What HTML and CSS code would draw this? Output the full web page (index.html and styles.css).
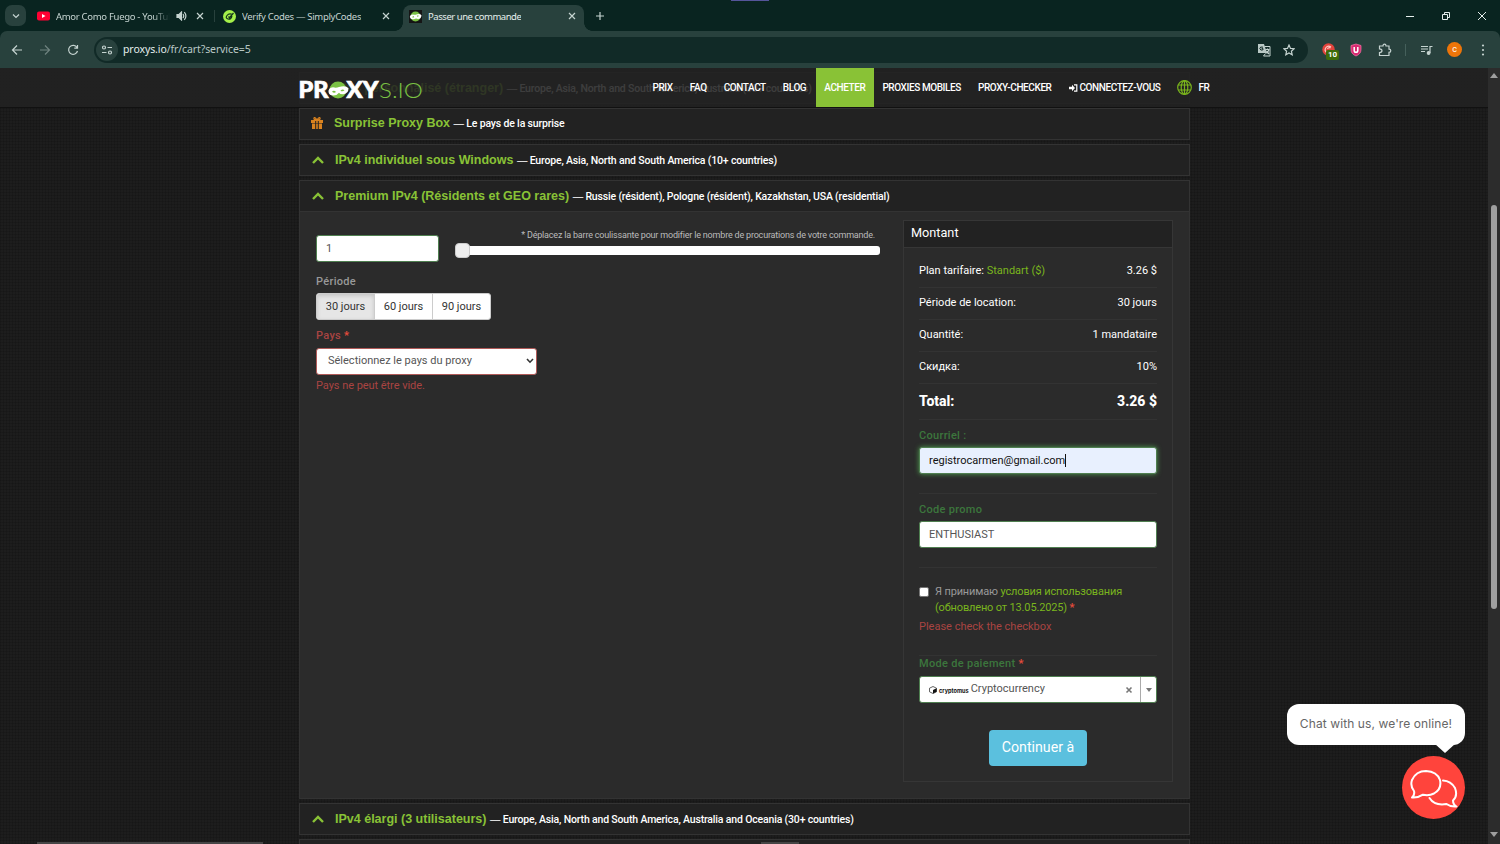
FILE: index.html
```html
<!DOCTYPE html>
<html lang="fr">
<head>
    <meta charset="UTF-8">
    <meta name="viewport" content="width=device-width, initial-scale=1.0">
    <title>Passer une commande</title>
    <link rel="stylesheet" href="styles.css">
</head>
<body>

    <!-- browser -->
    <div class="tabs">
        <div class="tab-search"><svg width="10" height="10" viewBox="0 0 10 10"><path d="M2 3.500l3 3 3-3" /></svg></div>
        <div class="tab tab-first">
            <svg class="fav" width="13" height="10" viewBox="0 0 13 10"><rect width="13" height="9" y=".5" rx="2" fill="#f03"/><path d="M5 3v4l3.500-2z" fill="#fff"/></svg>
            <span class="tab-name fade">Amor Como Fuego - YouTube</span>
            <svg class="sound" width="11" height="10" viewBox="0 0 11 10"><path d="M1 3.500h2l2.500-2.500v8L3 6.500H1z" fill="#c5d3d0"/><path d="M7 3q1.500 2 0 4M8.300 1.200q3.200 3.800 0 7.600"/></svg>
            <svg class="close" width="8" height="8" viewBox="0 0 8 8"><path d="M1 1l6 6M7 1l-6 6"/></svg>
        </div>
        <div class="tab tab-second">
            <svg class="fav" width="13" height="13" viewBox="0 0 13 13"><circle cx="6.500" cy="6.500" r="6.500" fill="#a5f04a"/><path class="code-mark" d="M9.500 4.500Q6 3 4 5.500t1 3.500q3 .8 4-3M5.500 6.500l1 1.200L10.500 3"/></svg>
            <span class="tab-name">Verify Codes — SimplyCodes</span>
            <svg class="close" width="8" height="8" viewBox="0 0 8 8"><path d="M1 1l6 6M7 1l-6 6"/></svg>
        </div>
        <div class="tab tab-active">
            <svg class="fav" width="13" height="13" viewBox="0 0 13 13"><rect width="13" height="13" fill="#151515"/><circle cx="6.500" cy="6.500" r="5" fill="#7ac143"/><path d="M.8 7Q1 4.500 4 4.500q2 .8 4-.3 4-.8 4.500 1.300-.5 3.500-3.500 3.500-2-1.200-4 .2Q1.500 10 .8 7z" fill="#fff"/><path d="M3.500 7.200l1.500-.6M8 6.200l1.500-.5" stroke="#7ac143"/></svg>
            <span class="tab-name">Passer une commande</span>
            <svg class="close" width="8" height="8" viewBox="0 0 8 8"><path d="M1 1l6 6M7 1l-6 6"/></svg>
        </div>
        <svg class="new-tab" width="10" height="10" viewBox="0 0 10 10"><path d="M5 1v8M1 5h8"/></svg>
        <div class="window-btns">
            <svg width="10" height="10" viewBox="0 0 10 10"><path d="M1 5.500h8"/></svg>
            <svg width="10" height="10" viewBox="0 0 10 10"><path d="M1.500 3.500h5v5h-5zM3.500 3.500v-2h5v5h-2"/></svg>
            <svg width="10" height="10" viewBox="0 0 10 10"><path d="M1 1l8 8M9 1L1 9"/></svg>
        </div>
        <div class="tab-mark"></div>
    </div>

    <div class="toolbar">
        <svg class="tool-icon" width="12" height="12" viewBox="0 0 12 12"><path d="M11 6H2M6 1.500L1.500 6 6 10.500"/></svg>
        <svg class="tool-icon off" width="12" height="12" viewBox="0 0 12 12"><path d="M1 6h9M6 1.500L10.500 6 6 10.500"/></svg>
        <svg class="tool-icon" width="12" height="12" viewBox="0 0 12 12"><path d="M10 3.500A4.500 4.500 0 1 0 10.500 7M10.500 1v3.200H7.300"/></svg>
        <div class="address">
            <div class="site-info"><svg width="12" height="12" viewBox="0 0 12 12"><circle cx="3" cy="3.500" r="1.500"/><path d="M6.500 3.500H11M1 8.500h4.500"/><circle cx="9" cy="8.500" r="1.500"/></svg></div>
            <span class="url">proxys.io<span>/fr/cart?service=5</span></span>
            <svg class="translate" width="14" height="14" viewBox="0 0 14 14"><path d="M1 1h6l3 9H1z" fill="#b9c8c5" stroke="none"/><path d="M7.500 3.500H13V13H6.500l2-2.500" stroke-width="1"/><path class="letter-g" d="M6 4.200Q3 3.200 2.800 5.600 3.500 8 6 6.800V5.600H4.600"/><path d="M8.500 6.500h4M10.500 5.500v1M12 6.500Q11 9.500 9.300 10.200M9.500 8l2.500 3"/></svg>
            <svg class="star" width="12" height="12" viewBox="0 0 12 12"><path d="M6 1l1.500 3.400 3.700.3-2.800 2.500.8 3.600L6 8.900l-3.200 1.900.8-3.600L.8 4.700l3.700-.3z"/></svg>
        </div>
        <div class="extensions">
            <div class="ext-red">
                <svg width="13" height="13" viewBox="0 0 13 13"><circle cx="6.500" cy="6.500" r="6.200" fill="#e2433c"/><path d="M9 4Q6 2 4 4.500t.5 5M8.500 5q-2-1-3 1" stroke="#ffc9c5"/></svg>
                <span class="badge">10</span>
            </div>
            <svg class="ext-shield" width="12" height="14" viewBox="0 0 12 14"><path class="shield" d="M6 1l5 1.500v4Q11 11 6 13 1 11 1 6.500v-4z"/><path class="letter-u" d="M4.200 4v3.500q0 1.800 1.800 1.800t1.800-1.800V4"/></svg>
            <svg class="ext-puzzle" width="14" height="14" viewBox="0 0 14 14"><path d="M1.500 3H5q0-1.800 1.500-1.800T8 3h3v3.200q1.800 0 1.800 1.600T11 9.400v3.100H1.500V9.600Q4 9.300 4 7.700T1.500 5.900z"/></svg>
            <div class="divider"></div>
            <svg class="ext-music" width="13" height="12" viewBox="0 0 13 12"><path d="M1 2.500h7M1 5h7M1 7.500h4M10 9V2.500h2.500"/><circle cx="8.600" cy="9" r="1.300" fill="#c5d3d0"/></svg>
            <div class="avatar">c</div>
            <svg class="ext-more" width="4" height="12" viewBox="0 0 4 12"><circle cx="2" cy="1.500" r="1.100"/><circle cx="2" cy="6" r="1.100"/><circle cx="2" cy="10.500" r="1.100"/></svg>
        </div>
    </div>

    <!-- site -->
    <div class="page">
        <div class="content">

            <div class="plan plan-title">
                <svg class="arrow" width="12" height="8" viewBox="0 0 12 8"><path d="M1 7l5-5 5 5"/></svg>
                <h4>IPv4 personnalisé (étranger)</h4><p><i>—</i> Europe, Asia, North and South America, Australia (30+ countries)</p>
            </div>

            <div class="plan plan-title plan-box">
                <svg class="gift" width="12" height="12" viewBox="0 0 12 12"><path d="M0 3h12v3H0zM1 6.500h10V12H1z" fill="#d9821f"/><path d="M6 3Q2.500 3 3 1.200T6 3q2.500-3.500 3-1.800T6 3" stroke="#d9821f" stroke-width="1.200"/><path d="M4.700 4v8M7.300 4v8" stroke="#222"/></svg>
                <h4>Surprise Proxy Box</h4><p><i>—</i> Le pays de la surprise</p>
            </div>

            <div class="plan plan-title">
                <svg class="arrow" width="12" height="8" viewBox="0 0 12 8"><path d="M1 7l5-5 5 5"/></svg>
                <h4>IPv4 individuel sous Windows</h4><p><i>—</i> Europe, Asia, North and South America (10+ countries)</p>
            </div>

            <div class="plan plan-open">
                <div class="plan-title">
                    <svg class="arrow" width="12" height="8" viewBox="0 0 12 8"><path d="M1 7l5-5 5 5"/></svg>
                    <h4>Premium IPv4 (Résidents et GEO rares)</h4><p><i>—</i> Russie (résident), Pologne (résident), Kazakhstan, USA (residential)</p>
                </div>
                <div class="plan-body">
                    <div class="order">
                        <div class="count">
                            <div class="field count-input">1</div>
                            <div class="slider">
                                <p class="hint">* Déplacez la barre coulissante pour modifier le nombre de procurations de votre commande.</p>
                                <div class="track"><div class="handle"></div></div>
                            </div>
                        </div>
                        <p class="label label-period">Période</p>
                        <div class="periods">
                            <div class="active">30 jours</div>
                            <div>60 jours</div>
                            <div>90 jours</div>
                        </div>
                        <p class="label label-country">Pays <b>*</b></p>
                        <div class="field country">
                            <span>Sélectionnez le pays du proxy</span>
                            <svg width="8" height="6" viewBox="0 0 8 6"><path d="M1 1l3 3.200L7 1" stroke="#333" stroke-width="1.600"/></svg>
                        </div>
                        <p class="error">Pays ne peut être vide.</p>
                    </div>

                    <div class="amount">
                        <div class="amount-title">Montant</div>
                        <div class="amount-body">
                            <div class="line"><span>Plan tarifaire: <a>Standart ($)</a></span><span>3.26 $</span></div>
                            <div class="line"><span>Période de location:</span><span>30 jours</span></div>
                            <div class="line"><span>Quantité:</span><span>1 mandataire</span></div>
                            <div class="line"><span>Скидка:</span><span>10%</span></div>
                            <div class="line total"><span>Total:</span><span>3.26 $</span></div>
                            <div class="group">
                                <p class="label label-ok">Courriel :</p>
                                <div class="field email">registrocarmen@gmail.com<i></i></div>
                            </div>
                            <div class="group">
                                <p class="label label-ok">Code promo</p>
                                <div class="field promo">ENTHUSIAST</div>
                            </div>
                            <div class="group rules">
                                <div class="rules-row">
                                    <div class="checkbox"></div>
                                    <p>Я принимаю <a>условия использования<br>(обновлено от 13.05.2025)</a> <b>*</b></p>
                                </div>
                                <p class="error">Please check the checkbox</p>
                            </div>
                            <div class="payment">
                                <p class="label label-ok">Mode de paiement <b>*</b></p>
                                <div class="field pay-select">
                                    <svg width="8" height="8" viewBox="0 0 8 8"><path d="M4 .5L7.500 2.200v3.600L4 7.500.5 5.800V2.200z" stroke="#222" stroke-width=".7"/><path d="M4 4l3.500-1.800v3.600L4 7.500z" fill="#111"/></svg>
                                    <span class="crypto">cryptomus</span>
                                    <span class="pay-name">Cryptocurrency</span>
                                    <svg class="clear" width="8" height="8" viewBox="0 0 8 8"><path d="M1.500 1.500l5 5M6.500 1.500l-5 5" stroke="#777" stroke-width="1.600"/></svg>
                                    <div class="pay-arrow"><svg width="6" height="4" viewBox="0 0 6 4"><path d="M0 0h6L3 4z" fill="#777"/></svg></div>
                                </div>
                            </div>
                            <div class="submit">Continuer à</div>
                        </div>
                    </div>
                </div>
            </div>

            <div class="plan plan-title plan-ext">
                <svg class="arrow" width="12" height="8" viewBox="0 0 12 8"><path d="M1 7l5-5 5 5"/></svg>
                <h4>IPv4 élargi (3 utilisateurs)</h4><p><i>—</i> Europe, Asia, North and South America, Australia and Oceania (30+ countries)</p>
            </div>
            <div class="plan plan-title"></div>
        </div>

        <div class="nav">
            <svg class="logo" width="124" height="22" viewBox="0 0 124 22">
                <text class="logo-bold" x="-.5" y="18" textLength="30" lengthAdjust="spacingAndGlyphs">PR</text>
                <circle cx="39" cy="10" r="8.500" fill="#7ac143"/>
                <path d="M29.500 12Q29 8 34 7.200q3 1 6-.2 7-1.800 9.500 1.200 0 5-5 6-3.500.2-4.500-1.500-2 2.800-5.500 2.800-4.500 0-5-3.500z" fill="#fff"/>
                <path d="M33 11.800q2-2 4 .3-2 1.200-4-.3zM41.500 10.800q2-2.200 4-.5-1.800 1.800-4 .5z" fill="#7ac143"/>
                <text class="logo-bold" x="47.500" y="18" textLength="32" lengthAdjust="spacingAndGlyphs">XY</text>
                <text class="logo-thin" x="80" y="18" textLength="44" lengthAdjust="spacingAndGlyphs">S.IO</text>
            </svg>
            <div class="menu">
                <a>PRIX</a>
                <a>FAQ</a>
                <a>CONTACT</a>
                <a>BLOG</a>
                <a class="buy">ACHETER</a>
                <a>PROXIES MOBILES</a>
                <a>PROXY-CHECKER</a>
                <a><svg width="9" height="8" viewBox="0 0 9 8"><path d="M0 2.800h3V.8L6 4 3 7.200v-2H0z" fill="#fff"/><path d="M5 .8h2.800v6.400H5" stroke="#fff" stroke-width="1.200"/></svg> CONNECTEZ-VOUS</a>
                <a class="lang"><svg width="15" height="15" viewBox="0 0 15 15"><circle cx="7.500" cy="7.500" r="6.800"/><ellipse cx="7.500" cy="7.500" rx="3.300" ry="6.800"/><path d="M7.500.7v13.600M1.200 5h12.600M1.200 10h12.600"/></svg>FR</a>
            </div>
        </div>

        <div class="chat">
            <div class="chat-text">Chat with us, we're online!</div>
            <div class="chat-btn">
                <svg width="50" height="42" viewBox="0 0 50 42"><path d="M5 24Q1 19 3 13 7 4 17 4q11 .5 14 9 2 9-6 13.500-5 2.500-11 1.200Q9 31 3 30.500 6 28 5 24z"/><path d="M34 13.500q8 .5 12 7.500 3 8-2 12.500 0 4 3.500 6-6 .5-10-2.500-12 2-17-6"/></svg>
            </div>
        </div>

        <div class="scrollbar">
            <svg width="8" height="5" viewBox="0 0 8 5"><path d="M4 0l4 5H0z" fill="#9f9f9f"/></svg>
            <div class="thumb"></div>
            <svg width="8" height="5" viewBox="0 0 8 5"><path d="M4 5l4-5H0z" fill="#9f9f9f"/></svg>
        </div>
        <div class="edge edge-left"></div>
        <div class="edge edge-center"></div>
    </div>

</body>
</html>
```
FILE: styles.css
```css
* {
    box-sizing: border-box;
}

body {
    display: flex;
    flex-direction: column;
    height: 844px;
    margin: 0;
    overflow: hidden;
    background-color: #092420;
    font-family: Roboto, sans-serif;
    font-size: 11px;
    color: #fff;
}

p, h4 {
    margin: 0;
}

svg {
    display: block;
    flex: none;
    fill: none;
}

/* browser */

.tabs {
    position: relative;
    display: flex;
    align-items: center;
    height: 31px;
    padding-left: 5px;
    font-family: "Noto Sans", sans-serif;
    font-size: 9.5px;
    color: #c5d3d0;
}

.tabs svg, .toolbar svg {
    stroke: #c5d3d0;
    stroke-width: 1.2;
}

.tabs .fav, .ext-red svg {
    stroke: none;
}

.fav .code-mark {
    stroke: #12301c;
}

.tab-search {
    display: flex;
    align-items: center;
    justify-content: center;
    width: 21px;
    height: 21px;
    border-radius: 7px;
    background-color: #28413d;
}

.tab {
    display: flex;
    align-items: center;
    height: 31px;
    padding-top: 1px;
}

.fav {
    margin-right: 6px;
}

.tab-name {
    overflow: hidden;
    white-space: nowrap;
    letter-spacing: -0.3px;
}

.tab-active .tab-name {
    letter-spacing: -0.45px;
}

.fade {
    flex: none;
    width: 114px;
    -webkit-mask-image: linear-gradient(90deg, #000 85%, transparent);
    mask-image: linear-gradient(90deg, #000 85%, transparent);
}

.tab .close {
    margin-left: auto;
}

.tab-first {
    width: 167px;
    margin-left: 11px;
}

.tab-first .sound {
    margin-left: 6px;
}

.tab-second {
    position: relative;
    width: 167px;
    margin-left: 19px;
}

.tab-second::before {
    content: "";
    position: absolute;
    left: -9px;
    width: 1px;
    height: 12px;
    background-color: #28413d;
}

.tab-active {
    position: relative;
    width: 181px;
    height: 26px;
    margin: 5px 0 0 13px;
    padding: 0 8px 4px 6px;
    border-radius: 8px 8px 0 0;
    background-color: #28413d;
    color: #e5eeec;
}

.tab-active::before, .tab-active::after {
    content: "";
    position: absolute;
    bottom: 0;
    width: 8px;
    height: 8px;
    background: radial-gradient(circle at 0 0, transparent 7.5px, #28413d 8px);
}

.tab-active::before {
    left: -8px;
}

.tab-active::after {
    right: -8px;
    transform: scaleX(-1);
}

.new-tab {
    margin-left: 11px;
}

.window-btns {
    display: flex;
    gap: 26px;
    margin: 0 13px 0 auto;
}

.tabs .window-btns svg {
    stroke: #e5eeec;
    stroke-width: 1;
}

.tab-mark {
    position: absolute;
    left: 731px;
    top: 0;
    width: 38px;
    height: 1px;
    background-color: #55559a;
}

.toolbar {
    display: flex;
    align-items: center;
    height: 37px;
    padding: 0 15px 0 11px;
    border-radius: 7px 7px 0 0;
    background-color: #28413d;
}

.toolbar .tool-icon {
    margin-right: 16px;
}

.toolbar .off {
    opacity: .45;
}

.address {
    display: flex;
    align-items: center;
    width: 1214px;
    height: 26px;
    margin-left: -1px;
    padding: 0 13px 0 2px;
    border-radius: 13px;
    background-color: #112a27;
}

.site-info {
    display: flex;
    align-items: center;
    justify-content: center;
    width: 22px;
    height: 22px;
    border-radius: 50%;
    background-color: #28413d;
}

.url {
    margin: -1px 0 0 5px;
    font-family: "Noto Sans", sans-serif;
    font-size: 10.5px;
    letter-spacing: -0.1px;
    color: #e5eeec;
}

.url span {
    color: #b9c8c5;
}

.translate {
    margin-left: auto;
}

.toolbar .letter-g {
    stroke: #112a27;
    stroke-width: 1;
}

.star {
    margin-left: 12px;
}

.extensions {
    display: flex;
    align-items: center;
    gap: 14px;
    margin-left: 14px;
}

.ext-red {
    position: relative;
}

.badge {
    position: absolute;
    left: 4px;
    top: 7px;
    width: 13px;
    height: 10px;
    border-radius: 2px;
    background-color: #3d6b0b;
    font-size: 8px;
    font-weight: 700;
    line-height: 10px;
    text-align: center;
}

.ext-shield {
    margin-left: 1px;
}

.shield {
    fill: #d92b72;
    stroke: #ff76ab;
    stroke-width: .7;
}

.letter-u {
    stroke: #fff;
    stroke-width: 1.5;
}

.ext-puzzle {
    margin-left: 2px;
}

.divider {
    width: 1px;
    height: 12px;
    margin-left: -1px;
    background-color: #45605b;
}

.avatar {
    width: 15px;
    height: 15px;
    border-radius: 50%;
    background-color: #ee7509;
    font-size: 9px;
    line-height: 14px;
    text-align: center;
}

.toolbar .ext-more {
    margin-left: 5px;
    stroke: none;
    fill: #c5d3d0;
}

/* site */

.page {
    position: relative;
    flex: 1;
    overflow: hidden;
    background-color: #1d1d1d;
    background-image:
        repeating-linear-gradient(0deg, rgba(0, 0, 0, .12) 0 1px, transparent 1px 3px),
        repeating-linear-gradient(90deg, rgba(0, 0, 0, .12) 0 1px, transparent 1px 3px);
}

.nav {
    position: absolute;
    left: 0;
    top: 0;
    display: flex;
    width: 1488px;
    height: 40px;
    padding-left: 299px;
    border-bottom: 1px solid #111;
    background-color: rgba(34, 34, 34, .88);
}

.logo {
    margin-top: 12px;
    overflow: visible;
}

.logo-bold {
    fill: #fff;
    stroke: #fff;
    stroke-width: .7;
    font-family: Lato, sans-serif;
    font-size: 22px;
    font-weight: 900;
}

.logo-thin {
    fill: #7ac143;
    font-family: Lato, sans-serif;
    font-size: 22px;
    font-weight: 300;
}

.menu {
    display: flex;
    margin-left: 221px;
    font-size: 10px;
    font-weight: 500;
    letter-spacing: -0.41px;
}

.menu a {
    display: flex;
    align-items: center;
    gap: 2px;
    height: 39px;
    padding: 0 8.5px;
    white-space: nowrap;
}

.menu .buy {
    margin-left: 1px;
    background-color: #89c236;
}

.menu .lang {
    gap: 6px;
}

.lang svg {
    stroke: #7ab51d;
    stroke-width: 1.2;
}

.content {
    display: flex;
    flex-direction: column;
    gap: 4px;
    width: 891px;
    margin: 4px 0 0 299px;
}

.plan {
    flex: none;
    border: 1px solid #333;
    background-color: #222;
}

.plan-title {
    display: flex;
    align-items: center;
    height: 32px;
    padding-left: 12px;
    white-space: nowrap;
}

.plan-title h4 {
    margin: 0 3.5px 0 11px;
    font-family: "Liberation Sans", sans-serif;
    font-size: 12.5px;
    color: #89c236;
}

.plan-title p {
    padding-top: 1px;
    font-size: 10.5px;
    font-weight: 500;
    letter-spacing: -0.17px;
}

.plan-title i {
    font-family: "Liberation Sans", sans-serif;
    font-style: normal;
    font-weight: 400;
}

.plan-box {
    padding-bottom: 2px;
}

.plan-ext {
    padding-bottom: 1px;
}

.arrow {
    stroke: #89c236;
    stroke-width: 2.4;
}

.plan-title .gift {
    margin-left: -1px;
}

.plan-open {
    height: 619px;
}

.plan-open .plan-title {
    height: 31px;
    border-bottom: 1px solid #333;
}

.plan-body {
    display: flex;
    justify-content: space-between;
    height: 586px;
    padding: 8px 16px;
    background-color: #2b2b2b;
}

.order {
    width: 564px;
    padding-top: 15px;
}

.count {
    display: flex;
    justify-content: space-between;
}

.field {
    display: flex;
    align-items: center;
    height: 27px;
    padding: 0 9px;
    border: 1px solid #4f7f50;
    border-radius: 3px;
    background-color: #fff;
    color: #555;
}

.count-input {
    width: 123px;
    padding-bottom: 1px;
}

.slider {
    width: 425px;
    margin-top: -6px;
}

.hint {
    height: 17px;
    padding-right: 5px;
    font-size: 9px;
    line-height: 13px;
    text-align: right;
    white-space: nowrap;
    letter-spacing: -0.19px;
    color: #bbb;
}

.track {
    height: 9px;
    border-radius: 3px;
    background-color: #fff;
}

.handle {
    position: relative;
    top: -3px;
    width: 15px;
    height: 15px;
    border: 1px solid #ccc;
    border-radius: 4px;
    background-color: #eee;
}

.label {
    font-weight: 500;
    line-height: 14px;
    letter-spacing: .3px;
}

.label b, .rules b {
    color: #e74c3c;
}

.label-period {
    margin-top: 13px;
    color: #999;
}

.periods {
    display: flex;
    width: 175px;
    height: 27px;
    margin-top: 4px;
    overflow: hidden;
    border: 1px solid #ccc;
    border-radius: 3px;
    background-color: #fff;
    color: #333;
    line-height: 25px;
    text-align: center;
}

.periods div {
    flex: 1;
    border-left: 1px solid #ccc;
}

.periods .active {
    border-left: 0;
    background-color: #e6e6e6;
    box-shadow: inset 0 2px 4px rgba(0, 0, 0, .15);
}

.label-country {
    margin-top: 9px;
    color: #a94442;
}

.country {
    justify-content: space-between;
    width: 221px;
    margin-top: 5px;
    padding: 0 2px 2px 11px;
    border-color: #b05a58;
}

.error {
    color: #a94442;
    line-height: 14px;
}

.order .error {
    margin-top: 4px;
    letter-spacing: -0.05px;
}

.amount {
    width: 270px;
    height: 562px;
    border: 1px solid #363636;
}

.amount-title {
    height: 27px;
    padding-left: 7px;
    border-bottom: 1px solid #363636;
    background-color: #222;
    font-size: 12.7px;
    line-height: 24px;
}

.amount-body {
    padding: 8px 15px 0;
}

.line {
    display: flex;
    justify-content: space-between;
    height: 32px;
    border-bottom: 1px solid #333;
    line-height: 29px;
}

.amount a {
    color: #7ab51d;
}

.total {
    height: 36px;
    font-size: 14px;
    font-weight: 800;
    line-height: 34px;
}

.group {
    height: 74px;
    padding-top: 9px;
    border-bottom: 1px solid #333;
}

.label-ok {
    color: #3c763d;
}

.group .field {
    margin-top: 4px;
}

.email {
    background-color: #e8f0fe;
    box-shadow: 0 0 5px #4d9a4e;
    color: #111;
}

.email i {
    width: 1px;
    height: 13px;
    background-color: #111;
}

.group.rules {
    height: 88px;
    padding-top: 16px;
}

.rules-row {
    display: flex;
    color: #999;
    line-height: 15.5px;
    letter-spacing: -0.15px;
}

.checkbox {
    width: 10px;
    height: 10px;
    margin: 3px 6px 0 0;
    border: 1px solid #767676;
    border-radius: 2px;
    background-color: #fff;
}

.rules .error {
    margin-top: 5px;
}

.payment {
    padding-top: 1px;
}

.payment .field {
    margin-top: 5px;
    padding-right: 0;
}

.crypto {
    margin: 2px 2px 0;
    font-family: Inter, sans-serif;
    font-size: 5.6px;
    font-weight: 700;
    color: #111;
}

.pay-name {
    padding-bottom: 2px;
}

.clear {
    margin-left: auto;
}

.pay-arrow {
    display: flex;
    align-items: center;
    justify-content: center;
    width: 16px;
    height: 25px;
    margin-left: 7px;
    border-left: 1px solid #aaa;
}

.submit {
    width: 98px;
    height: 36px;
    margin: 27px auto 0;
    border-radius: 4px;
    background-color: #5bc0de;
    font-size: 14.2px;
    line-height: 35px;
    text-align: center;
}

.chat {
    position: absolute;
    right: 35px;
    bottom: 25px;
    display: flex;
    flex-direction: column;
    align-items: flex-end;
}

.chat-text {
    position: relative;
    width: 178px;
    height: 41px;
    border-radius: 12px;
    background-color: #fff;
    font-family: Inter, sans-serif;
    font-size: 12px;
    line-height: 40px;
    letter-spacing: .1px;
    text-align: center;
    color: #666;
}

.chat-text::after {
    content: "";
    position: absolute;
    right: 10px;
    top: 40px;
    border: 10px solid transparent;
    border-top: 9px solid #fff;
    border-bottom: 0;
}

.chat-btn {
    display: flex;
    align-items: center;
    justify-content: center;
    width: 63px;
    height: 63px;
    margin-top: 11px;
    border-radius: 50%;
    background-color: #ff443c;
}

.chat-btn svg {
    stroke: #fff;
    stroke-width: 2;
    stroke-linejoin: round;
    stroke-linecap: round;
}

.scrollbar {
    position: absolute;
    right: 0;
    top: 0;
    display: flex;
    flex-direction: column;
    align-items: center;
    width: 12px;
    height: 776px;
    padding: 5px 0 7px;
    background-color: #2c2c2c;
}

.thumb {
    width: 6px;
    height: 404px;
    margin: 127px 0 auto;
    border-radius: 3px;
    background-color: #9f9f9f;
}

.edge {
    position: absolute;
    bottom: 0;
    height: 2px;
    background-color: #454545;
}

.edge-left {
    left: 37px;
    width: 226px;
}

.edge-center {
    left: 761px;
    width: 38px;
}
```
